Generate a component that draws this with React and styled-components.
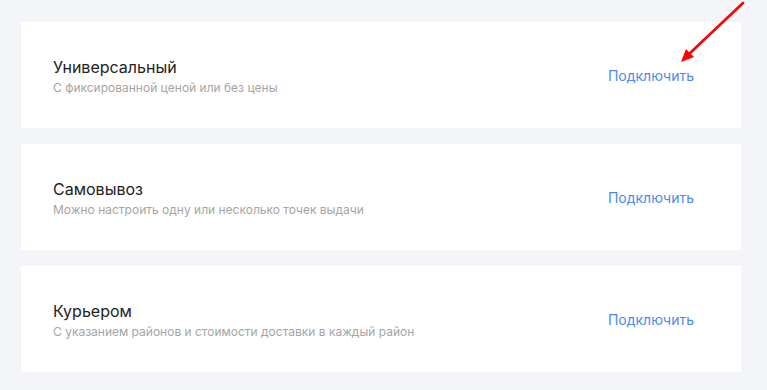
import styled, { createGlobalStyle } from 'styled-components';

const GlobalStyle = createGlobalStyle`
    html, body {
        margin: 0;
        padding: 0;
        background: #f4f5f9;
        font-family: Inter, Roboto, "Liberation Sans", Arial, sans-serif;
    }
`;

const methods = [
    { title: 'Универсальный', note: 'С фиксированной ценой или без цены' },
    { title: 'Самовывоз', note: 'Можно настроить одну или несколько точек выдачи' },
    { title: 'Курьером', note: 'С указанием районов и стоимости доставки в каждый район' },
];

const App = () => {
    return <>
        <GlobalStyle />
        <Page>
            <List>
                {
                    methods.map((item) => {
                        return (
                            <Card key={item.title}>
                                <TextBlock>
                                    <Title>{item.title}</Title>
                                    <Note>{item.note}</Note>
                                </TextBlock>
                                <ConnectLink href="#">Подключить</ConnectLink>
                            </Card>
                        );
                    })
                }
            </List>
            <Arrow width="80" height="70" viewBox="0 0 80 70">
                <line x1="73" y1="3" x2="19" y2="54" stroke="#f00" strokeWidth="2.6" strokeLinecap="round" />
                <polygon points="11,62 16,49 24,57" fill="#f00" />
            </Arrow>
        </Page>
    </>;
};

const Page = styled.div`
    position: relative;
    width: 767px;
    height: 390px;
    padding: 22px 26px 0 21px;
    box-sizing: border-box;
`;

const List = styled.div`
    display: flex;
    flex-direction: column;
    gap: 16px;
`;

const Card = styled.div`
    background: #fff;
    height: 106px;
    box-sizing: border-box;
    padding: 0 47px 0 32px;
    display: flex;
    align-items: center;
    justify-content: space-between;
`;

const TextBlock = styled.div`
    display: flex;
    flex-direction: column;
    gap: 3px;
    margin-top: 2px;
`;

const Title = styled.div`
    font-size: 16px;
    line-height: 20px;
    color: #222;
`;

const Note = styled.div`
    font-size: 12px;
    line-height: 16px;
    color: #a5a5a5;
`;

const ConnectLink = styled.a`
    font-size: 14px;
    color: #4c89f0;
    text-decoration: none;
`;

const Arrow = styled.svg`
    position: absolute;
    left: 670px;
    top: 0;
`;

export default App;
